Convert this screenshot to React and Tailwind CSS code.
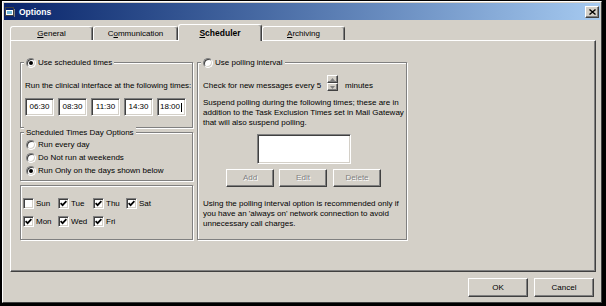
import React from 'react';

const sunken =
  'border border-t-[#808080] border-l-[#808080] border-r-white border-b-white shadow-[inset_1px_1px_0_#404040,inset_-1px_-1px_0_#d4d0c8]';
const raised =
  'border border-t-white border-l-white border-r-[#404040] border-b-[#404040] shadow-[inset_-1px_-1px_0_#808080]';
const groupBox = 'border border-[#808080] shadow-[inset_1px_1px_0_#fff,1px_1px_0_#fff]';

const Radio = ({ checked }) => (
  <span className="flex h-[10px] w-[10px] shrink-0 items-center justify-center rounded-full border border-t-[#808080] border-l-[#808080] border-r-white border-b-white bg-white shadow-[inset_1px_1px_0_#404040,inset_-1px_-1px_0_#d4d0c8]">
    {checked && <span className="h-[4px] w-[4px] rounded-full bg-black" />}
  </span>
);

const Check = ({ checked }) => (
  <span className={`flex h-[11px] w-[11px] shrink-0 items-center justify-center bg-white ${sunken}`}>
    {checked && (
      <svg width="7" height="7" viewBox="0 0 7 7">
        <path d="M0.6 3.2 L2.6 5.2 L6.4 1.2" stroke="black" strokeWidth="1.7" fill="none" />
      </svg>
    )}
  </span>
);

const Day = ({ label, checked }) => (
  <div className="flex h-[11px] items-center gap-[2px]">
    <Check checked={checked} />
    <span>{label}</span>
  </div>
);

const TimeBox = ({ value, left }) => (
  <div
    className={`flex h-[18px] w-[29px] items-center bg-white ${sunken} ${left ? 'justify-start pl-[2px]' : 'justify-center'}`}
  >
    {value}
    {left && <span className="ml-[1px] h-[9px] w-[1px] bg-black" />}
  </div>
);

const Tab = ({ width, selected, children }) => (
  <div
    className={`${width} flex items-center justify-center rounded-t-[3px] border-t border-l border-r border-t-white border-l-white border-r-[#404040] shadow-[inset_-1px_0_0_#808080] ${
      selected ? 'relative z-10 -mb-[1px] h-[17px] bg-[#d4d0c8] pb-[1px] font-bold' : 'h-[14px]'
    }`}
  >
    {children}
  </div>
);

const DisabledButton = ({ children }) => (
  <div
    className={`flex h-[18px] w-[48px] items-center justify-center bg-[#d4d0c8] text-[#808080] [text-shadow:1px_1px_0_#fff] ${raised}`}
  >
    {children}
  </div>
);

const App = () => {
  return (
    <div className="h-[306px] w-[606px] bg-black pt-[1px] pl-[2px] font-['Liberation_Sans',Arial,sans-serif] text-[8px] leading-[10px] text-black">
      <div className="flex h-[302px] w-[600px] flex-col border border-t-white border-l-white border-r-[#404040] border-b-[#404040] bg-[#d4d0c8] p-[1px]">
        {/* Title bar */}
        <div className="flex h-[17px] items-center bg-linear-to-r from-[#0a246a] to-[#a6caf0] px-[1px]">
          <svg width="10" height="10" viewBox="0 0 10 10" className="shrink-0">
            <rect x="0.5" y="0.5" width="8" height="8" fill="#ffffff" stroke="#404040" />
            <rect x="1" y="1" width="7" height="2" fill="#0a246a" />
            <rect x="2" y="4" width="5" height="3" fill="#6fb7d8" />
            <rect x="9" y="2" width="1" height="8" fill="#808080" />
          </svg>
          <span className="ml-[4px] text-[8.5px] font-bold text-white">Options</span>
          <div className={`ml-auto flex h-[12px] w-[14px] items-center justify-center bg-[#d4d0c8] ${raised}`}>
            <svg width="7" height="6" viewBox="0 0 7 6">
              <path d="M0.5 0.5 L6.5 5.5 M6.5 0.5 L0.5 5.5" stroke="black" strokeWidth="1.4" />
            </svg>
          </div>
        </div>

        {/* Tabs */}
        <div className="mt-[4px] flex h-[16px] items-end pl-[6px]">
          <Tab width="w-[83px]">
            <span>
              <span className="underline">G</span>eneral
            </span>
          </Tab>
          <Tab width="w-[85px]">
            <span>
              C<span className="underline">o</span>mmunication
            </span>
          </Tab>
          <Tab width="w-[84px]" selected>
            <span className="text-[8.5px]">
              <span className="underline">S</span>cheduler
            </span>
          </Tab>
          <Tab width="w-[83px]">
            <span>
              <span className="underline">A</span>rchiving
            </span>
          </Tab>
        </div>

        {/* Panel */}
        <div className="ml-[6px] flex h-[232px] w-[586px] items-start border border-t-white border-l-white border-r-[#404040] border-b-[#404040] pt-[21px] pl-[9px] shadow-[inset_-1px_-1px_0_#808080]">
          {/* Left column */}
          <div className="flex w-[173px] flex-col">
            <div className={`h-[66px] ${groupBox}`}>
              <div className="-mt-[6px] ml-[3px] flex h-[11px] w-fit items-center gap-[2px] bg-[#d4d0c8] px-[2px]">
                <Radio checked />
                <span>Use scheduled times</span>
              </div>
              <p className="mt-[13px] pl-[4px]">Run the clinical interface at the following times:</p>
              <div className="mt-[7px] flex gap-[4px] pl-[4px]">
                <TimeBox value="06:30" />
                <TimeBox value="08:30" />
                <TimeBox value="11:30" />
                <TimeBox value="14:30" />
                <TimeBox value="18:00" left />
              </div>
            </div>

            <div className={`mt-[4px] h-[49px] ${groupBox}`}>
              <div className="-mt-[6px] ml-[3px] flex h-[11px] w-fit items-center bg-[#d4d0c8] px-[2px]">
                Scheduled Times Day Options
              </div>
              <div className="flex flex-col pl-[5px]">
                <div className="flex h-[13px] items-center gap-[2px]">
                  <Radio />
                  <span>Run every day</span>
                </div>
                <div className="flex h-[13px] items-center gap-[2px]">
                  <Radio />
                  <span>Do Not run at weekends</span>
                </div>
                <div className="flex h-[13px] items-center gap-[2px]">
                  <Radio checked />
                  <span>Run Only on the days shown below</span>
                </div>
              </div>
            </div>

            <div className={`mt-[4px] h-[55px] pt-[12px] pl-[2px] ${groupBox}`}>
              <div className="grid grid-cols-[35px_35px_33px_auto] gap-y-[7px]">
                <Day label="Sun" />
                <Day label="Tue" checked />
                <Day label="Thu" checked />
                <Day label="Sat" checked />
                <Day label="Mon" checked />
                <Day label="Wed" checked />
                <Day label="Fri" checked />
              </div>
            </div>
          </div>

          {/* Right column */}
          <div className={`ml-[4px] h-[178px] w-[210px] ${groupBox}`}>
            <div className="-mt-[6px] ml-[3px] flex h-[11px] w-fit items-center gap-[2px] bg-[#d4d0c8] px-[2px]">
              <Radio />
              <span>Use polling interval</span>
            </div>
            <div className="mt-[7px] flex h-[16px] items-start pl-[5px]">
              <span className="w-[124px] pt-[6px]">Check for new messages every 5</span>
              <div className="flex h-[16px] w-[11px] flex-col">
                <div className={`flex h-[8px] items-center justify-center bg-[#d4d0c8] ${raised}`}>
                  <svg width="5" height="3" viewBox="0 0 5 3">
                    <path d="M2.5 0 L5 3 L0 3 Z" fill="#808080" />
                  </svg>
                </div>
                <div className={`flex h-[8px] items-center justify-center bg-[#d4d0c8] ${raised}`}>
                  <svg width="5" height="3" viewBox="0 0 5 3">
                    <path d="M0 0 L5 0 L2.5 3 Z" fill="#808080" />
                  </svg>
                </div>
              </div>
              <span className="ml-[7px] pt-[6px]">minutes</span>
            </div>
            <p className="mt-[7px] pl-[5px]">
              Suspend polling during the following times; these are in
              <br />
              addition to the Task Exclusion Times set in Mail Gateway
              <br />
              that will also suspend polling.
            </p>
            <div className={`mt-[6px] ml-[59px] h-[30px] w-[94px] bg-white ${sunken}`} />
            <div className="mt-[5px] ml-[28px] flex">
              <DisabledButton>Add</DisabledButton>
              <div className="ml-[5px]">
                <DisabledButton>Edit</DisabledButton>
              </div>
              <div className="ml-[6px]">
                <DisabledButton>Delete</DisabledButton>
              </div>
            </div>
            <p className="mt-[12px] pl-[5px]">
              Using the polling interval option is recommended only if
              <br />
              you have an 'always on' network connection to avoid
              <br />
              unnecessary call charges.
            </p>
          </div>
        </div>

        {/* Dialog buttons */}
        <div className="mt-[6px] flex justify-end gap-[6px] pr-[6px]">
          <div className={`flex h-[19px] w-[60px] items-center justify-center bg-[#d4d0c8] ${raised}`}>OK</div>
          <div className={`flex h-[19px] w-[60px] items-center justify-center bg-[#d4d0c8] ${raised}`}>Cancel</div>
        </div>
      </div>
    </div>
  );
};

export default App;
